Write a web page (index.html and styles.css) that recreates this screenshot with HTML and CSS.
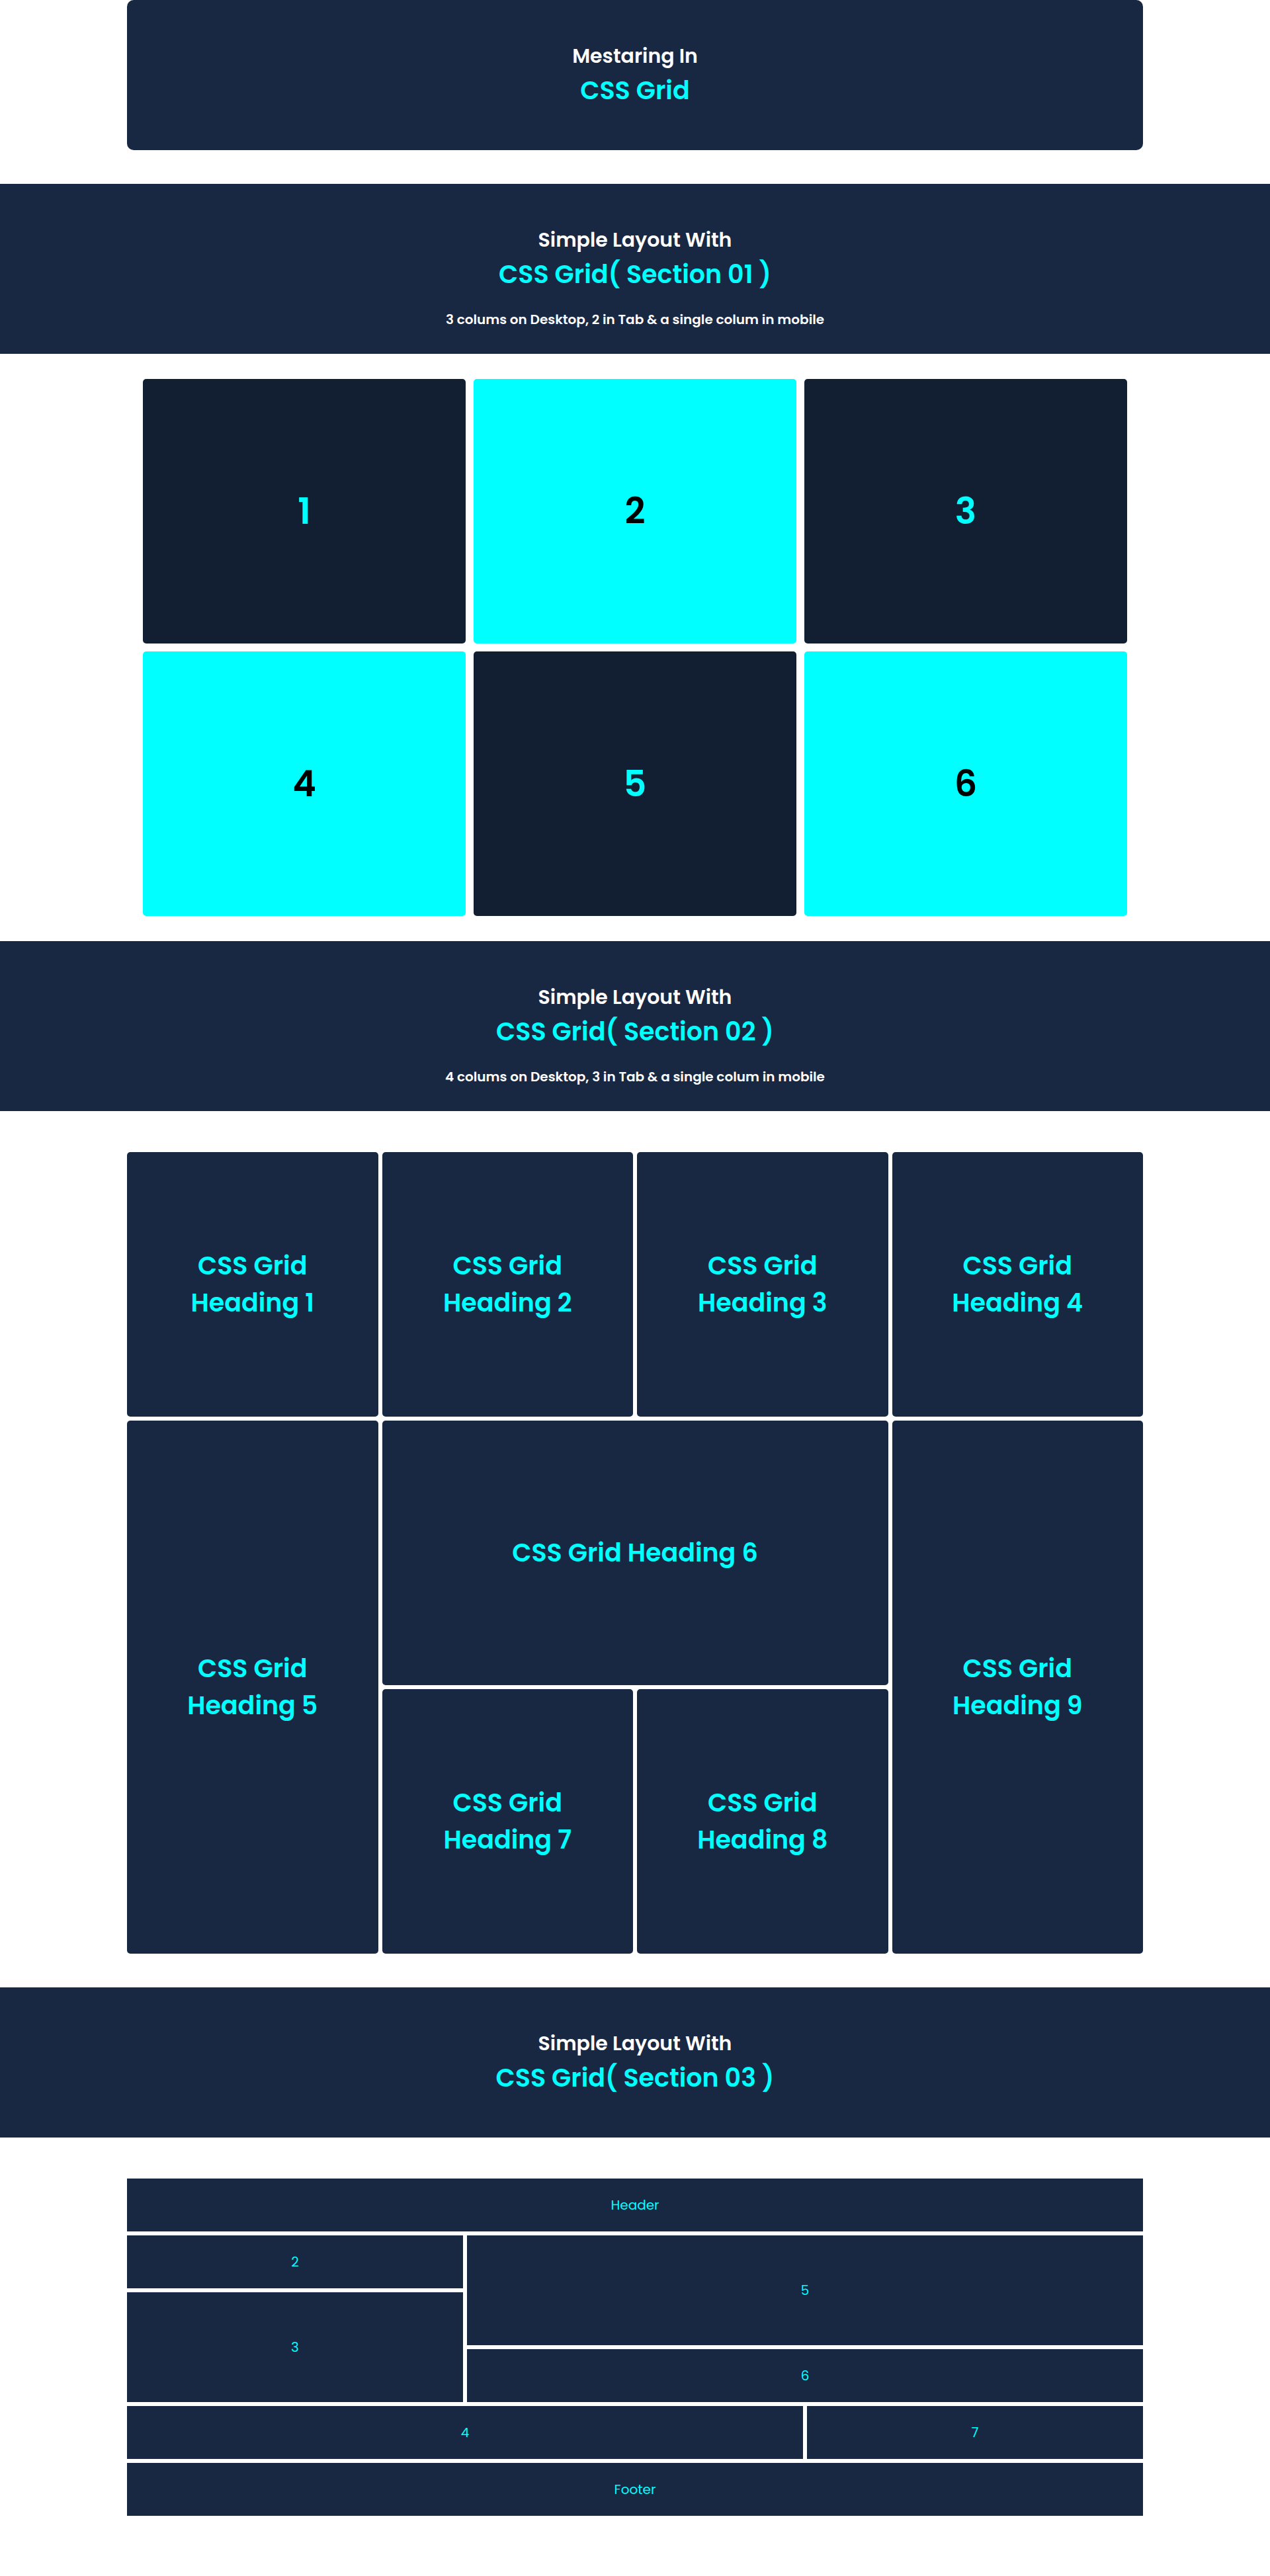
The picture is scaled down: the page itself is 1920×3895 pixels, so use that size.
FILE: index.html
```html
<!DOCTYPE html>
<html lang="en">

<head>
    <meta charset="UTF-8">
    <meta name="viewport" content="width=device-width, initial-scale=1.0">
    <title>Mestaring In CSS Grid</title>
    <link rel="stylesheet" href="styles.css">
</head>

<body>
    <div class="container">
        <header class="hero">
            <h3 class="kicker">Mestaring In</h3>
            <h1 class="title">CSS Grid</h1>
        </header>
    </div>

    <!-- Section 01 -->
    <section class="banner banner-note">
        <h3 class="kicker">Simple Layout With</h3>
        <h2 class="title">CSS Grid( Section 01 )</h2>
        <p class="note">3 colums on Desktop, 2 in Tab &amp; a single colum in mobile</p>
    </section>

    <div class="container">
        <div class="grid-one">
            <div class="box dark">1</div>
            <div class="box light">2</div>
            <div class="box dark">3</div>
            <div class="box light">4</div>
            <div class="box dark">5</div>
            <div class="box light">6</div>
        </div>
    </div>

    <!-- Section 02 -->
    <section class="banner banner-note">
        <h3 class="kicker">Simple Layout With</h3>
        <h2 class="title">CSS Grid( Section 02 )</h2>
        <p class="note">4 colums on Desktop, 3 in Tab &amp; a single colum in mobile</p>
    </section>

    <div class="container">
        <div class="grid-two">
            <div class="card card-1"><h2>CSS Grid Heading 1</h2></div>
            <div class="card card-2"><h2>CSS Grid Heading 2</h2></div>
            <div class="card card-3"><h2>CSS Grid Heading 3</h2></div>
            <div class="card card-4"><h2>CSS Grid Heading 4</h2></div>
            <div class="card card-5"><h2>CSS Grid Heading 5</h2></div>
            <div class="card card-6"><h2>CSS Grid Heading 6</h2></div>
            <div class="card card-7"><h2>CSS Grid Heading 7</h2></div>
            <div class="card card-8"><h2>CSS Grid Heading 8</h2></div>
            <div class="card card-9"><h2>CSS Grid Heading 9</h2></div>
        </div>
    </div>

    <!-- Section 03 -->
    <section class="banner">
        <h3 class="kicker">Simple Layout With</h3>
        <h2 class="title">CSS Grid( Section 03 )</h2>
    </section>

    <div class="container">
        <div class="grid-three">
            <div class="area area-header">Header</div>
            <div class="area area-2">2</div>
            <div class="area area-3">3</div>
            <div class="area area-5">5</div>
            <div class="area area-6">6</div>
            <div class="area area-4">4</div>
            <div class="area area-7">7</div>
            <div class="area area-footer">Footer</div>
        </div>
    </div>
</body>

</html>
```

FILE: styles.css
```css
* {
    box-sizing: border-box;
}

body {
    font-family: "Poppins", "Inter", sans-serif;
    background-color: #fff;
    margin: 0;
}

.container {
    width: 80%;
    margin: 0 auto;
}

.hero {
    background-color: #182842;
    border-radius: 10px;
    text-align: center;
    padding: 61px 0 62px;
    margin-bottom: 51px;
}

.kicker {
    margin: 0;
    color: #fff;
    font-size: 30px;
    font-weight: 600;
    line-height: 48px;
}

.title {
    margin: 0;
    color: #00ffff;
    font-size: 38px;
    font-weight: 600;
    line-height: 56px;
}

.banner {
    background-color: #182842;
    text-align: center;
    padding: 61px 0 62px;
}

.banner-note {
    padding-bottom: 40px;
}

.note {
    margin: 28px 0 0;
    color: #fff;
    font-size: 20px;
    font-weight: 600;
    line-height: 24px;
}

/* section 01 */
.grid-one {
    display: grid;
    grid-template-columns: repeat(3, 1fr);
    grid-auto-rows: 400px;
    gap: 12px;
    padding: 38px 24px;
}

.box {
    display: flex;
    align-items: center;
    justify-content: center;
    border-radius: 5px;
    font-size: 54px;
    font-weight: 600;
}

.box.dark {
    background-color: #121f33;
    color: #00ffff;
}

.box.light {
    background-color: #00ffff;
    color: #000;
}

/* section 02 */
.grid-two {
    display: grid;
    grid-template-columns: repeat(4, 1fr);
    grid-template-rows: repeat(3, 400px);
    grid-template-areas:
        "c1 c2 c3 c4"
        "c5 c6 c6 c9"
        "c5 c7 c8 c9";
    gap: 6px;
    padding: 62px 0 51px;
}

.card {
    display: flex;
    align-items: center;
    justify-content: center;
    background-color: #182842;
    border-radius: 5px;
    padding: 0 30px;
    text-align: center;
}

.card h2 {
    margin: 0;
    color: #00ffff;
    font-size: 38px;
    font-weight: 600;
    line-height: 56px;
}

.card-1 { grid-area: c1; }
.card-2 { grid-area: c2; }
.card-3 { grid-area: c3; }
.card-4 { grid-area: c4; }
.card-5 { grid-area: c5; }
.card-6 { grid-area: c6; }
.card-7 { grid-area: c7; }
.card-8 { grid-area: c8; }
.card-9 { grid-area: c9; }

/* section 03 */
.grid-three {
    display: grid;
    grid-template-columns: repeat(3, 1fr);
    grid-template-rows: repeat(6, 80px);
    grid-template-areas:
        "hd hd hd"
        "a2 a5 a5"
        "a3 a5 a5"
        "a3 a6 a6"
        "a4 a4 a7"
        "ft ft ft";
    gap: 6px;
    padding: 62px 0 87px;
}

.area {
    display: flex;
    align-items: center;
    justify-content: center;
    background-color: #182842;
    color: #00ffff;
    font-size: 20px;
}

.area-header { grid-area: hd; }
.area-2 { grid-area: a2; }
.area-3 { grid-area: a3; }
.area-5 { grid-area: a5; }
.area-6 { grid-area: a6; }
.area-4 { grid-area: a4; }
.area-7 { grid-area: a7; }
.area-footer { grid-area: ft; }
```
